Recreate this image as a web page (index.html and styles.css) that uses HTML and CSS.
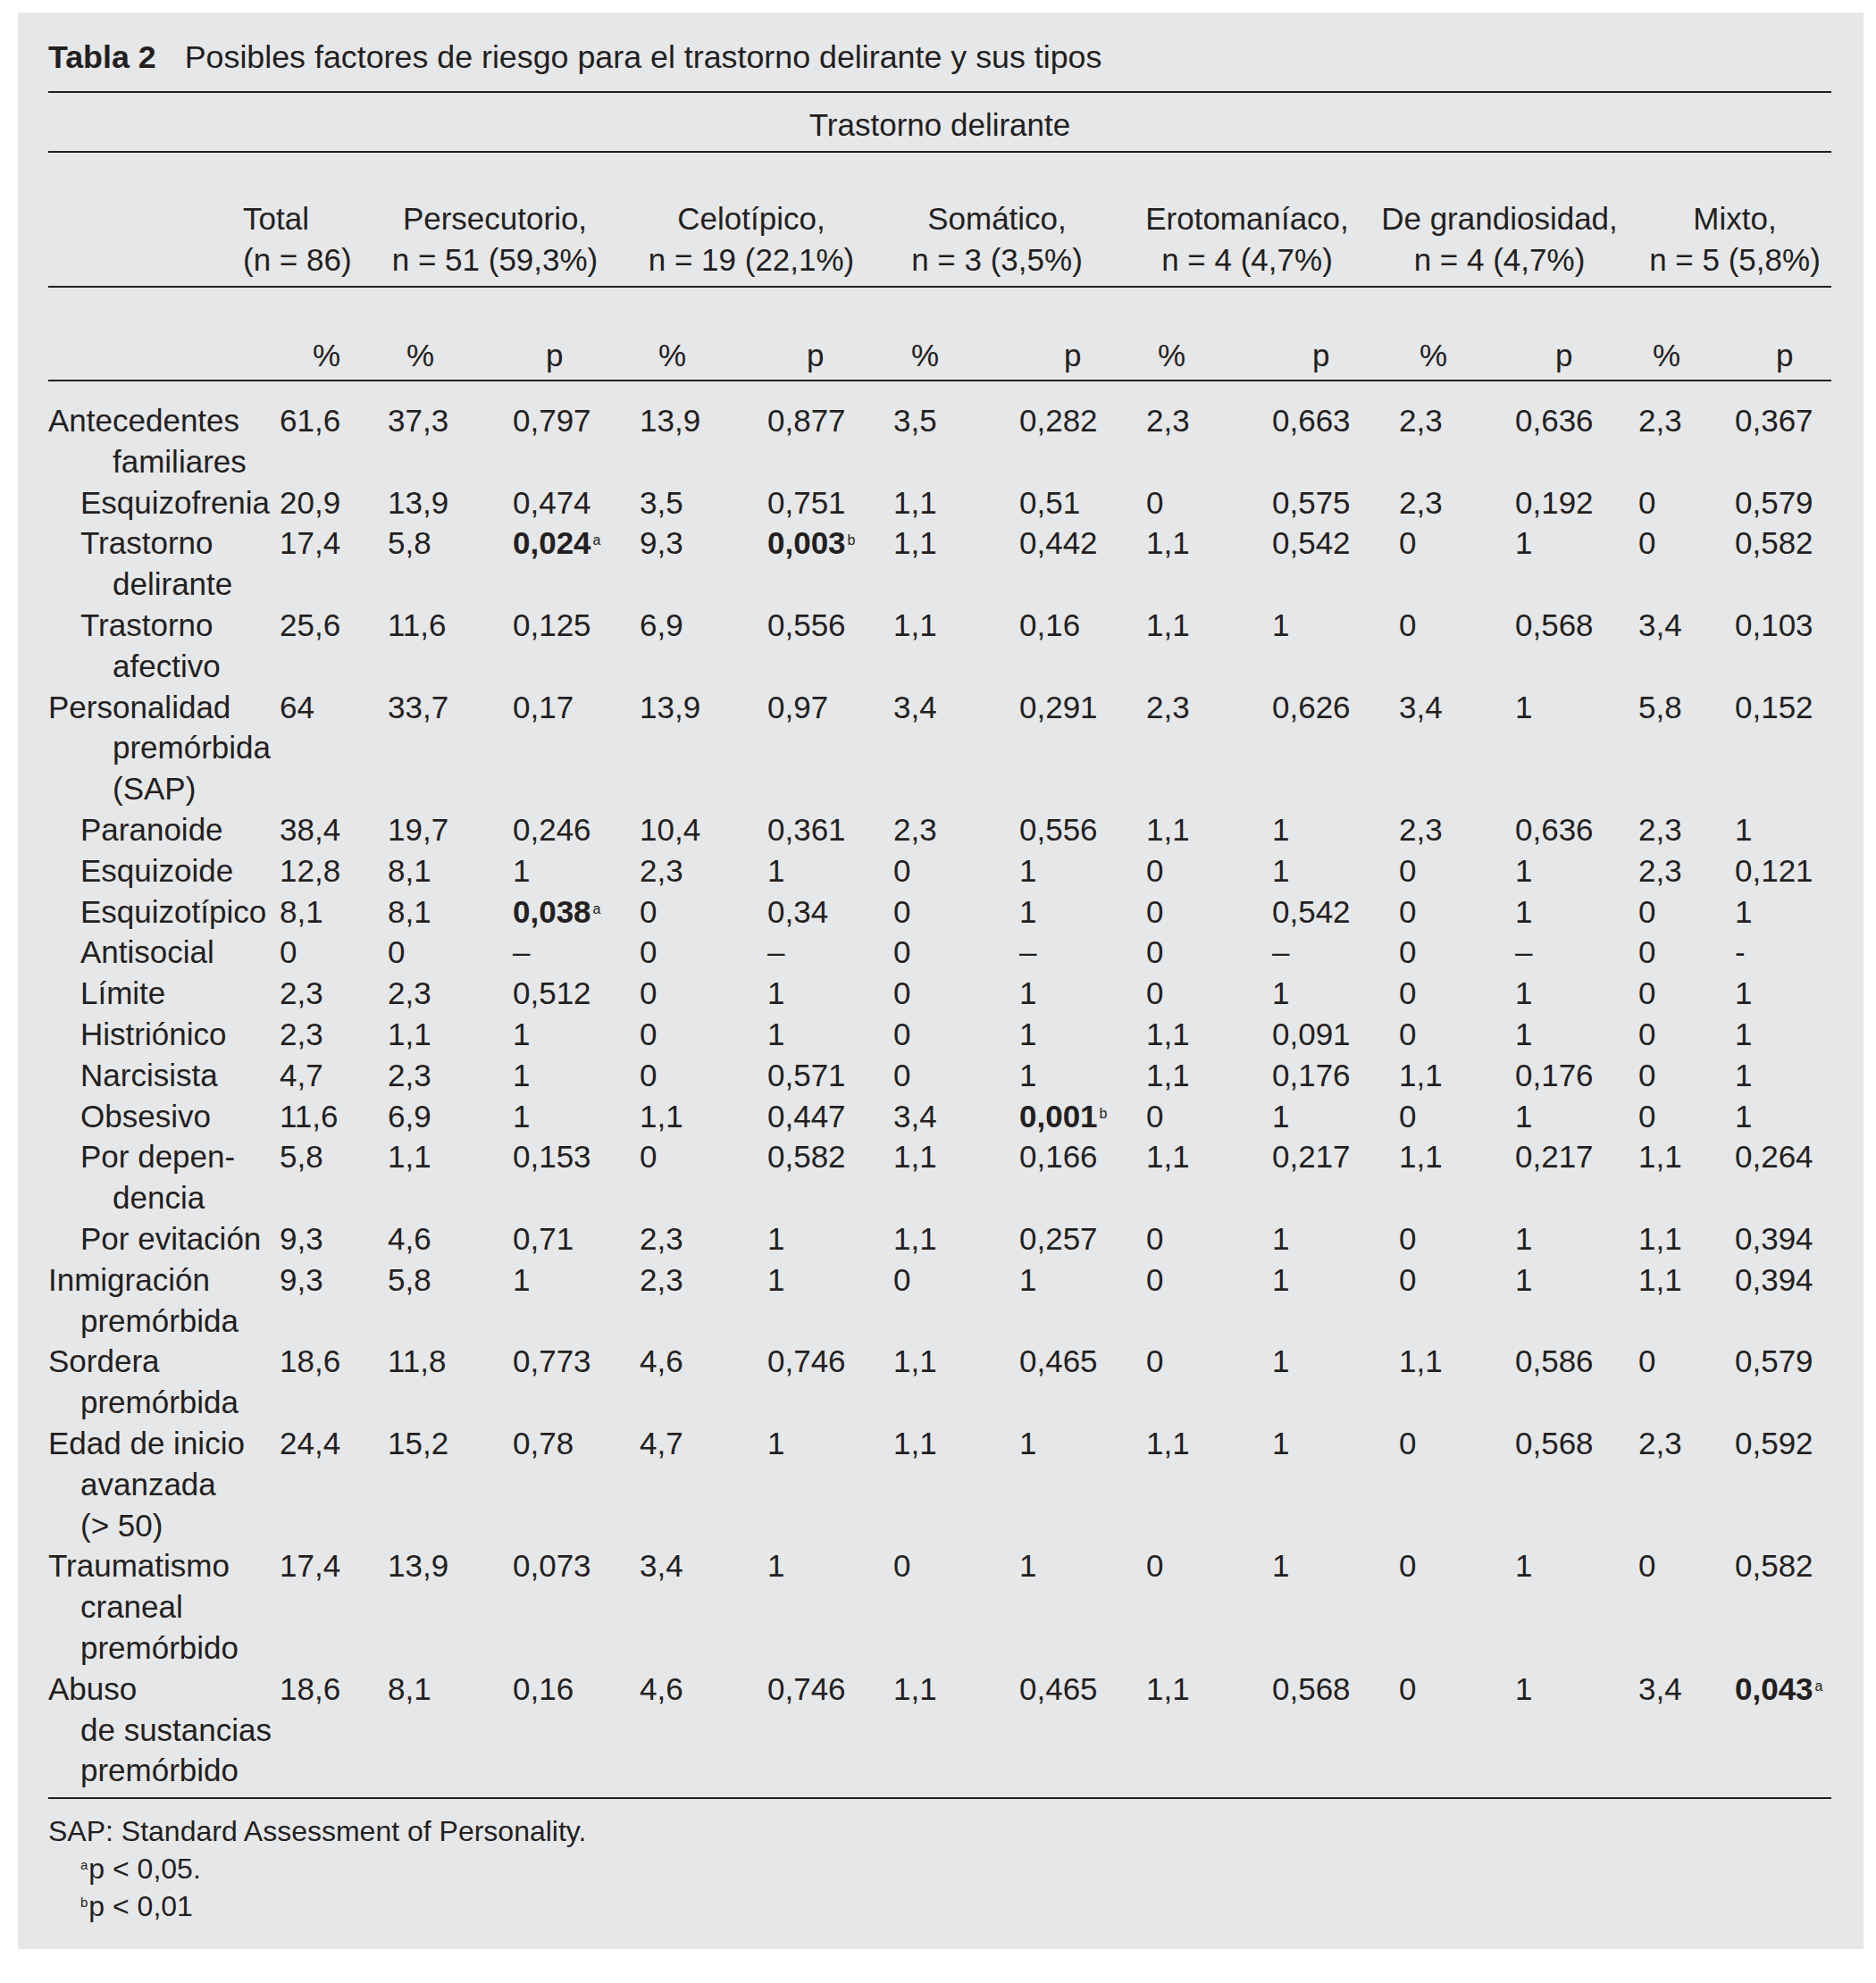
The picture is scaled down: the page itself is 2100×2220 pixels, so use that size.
FILE: index.html
```html
<!DOCTYPE html>
<html lang="es">
<head>
<meta charset="utf-8">
<title>Tabla 2</title>
<link rel="stylesheet" href="styles.css">
</head>
<body>
<div class="panel">
  <div class="title"><b class="title-num">Tabla 2</b><span>Posibles factores de riesgo para el trastorno delirante y sus tipos</span></div>
  <div class="rule"></div>
  <div class="super">Trastorno delirante</div>
  <div class="rule"></div>

  <div class="grid head">
    <div></div>
    <div class="h-total"><span>Total</span><span>(n = 86)</span></div>
    <div class="grp g-per"><span>Persecutorio,</span><span>n = 51 (59,3%)</span></div>
    <div class="grp g-cel"><span>Celotípico,</span><span>n = 19 (22,1%)</span></div>
    <div class="grp g-som"><span>Somático,</span><span>n = 3 (3,5%)</span></div>
    <div class="grp g-ero"><span>Erotomaníaco,</span><span>n = 4 (4,7%)</span></div>
    <div class="grp g-gra"><span>De grandiosidad,</span><span>n = 4 (4,7%)</span></div>
    <div class="grp g-mix"><span>Mixto,</span><span>n = 5 (5,8%)</span></div>
  </div>
  <div class="rule"></div>

  <div class="grid sub">
    <div></div>
    <div class="s1">%</div>
    <div class="s2">%</div><div class="s3">p</div>
    <div class="s4">%</div><div class="s5">p</div>
    <div class="s6">%</div><div class="s7">p</div>
    <div class="s8">%</div><div class="s9">p</div>
    <div class="s10">%</div><div class="s11">p</div>
    <div class="s12">%</div><div class="s13">p</div>
  </div>
  <div class="rule"></div>

  <div class="body">
    <div class="grid row"><div class="lbl">Antecedentes<span class="cont deep">familiares</span></div><div>61,6</div><div>37,3</div><div>0,797</div><div>13,9</div><div>0,877</div><div>3,5</div><div>0,282</div><div>2,3</div><div>0,663</div><div>2,3</div><div>0,636</div><div>2,3</div><div>0,367</div></div>
    <div class="grid row"><div class="lbl sub-item">Esquizofrenia</div><div>20,9</div><div>13,9</div><div>0,474</div><div>3,5</div><div>0,751</div><div>1,1</div><div>0,51</div><div>0</div><div>0,575</div><div>2,3</div><div>0,192</div><div>0</div><div>0,579</div></div>
    <div class="grid row"><div class="lbl sub-item">Trastorno<span class="cont">delirante</span></div><div>17,4</div><div>5,8</div><div><b class="sig">0,024<sup>a</sup></b></div><div>9,3</div><div><b class="sig">0,003<sup>b</sup></b></div><div>1,1</div><div>0,442</div><div>1,1</div><div>0,542</div><div>0</div><div>1</div><div>0</div><div>0,582</div></div>
    <div class="grid row"><div class="lbl sub-item">Trastorno<span class="cont">afectivo</span></div><div>25,6</div><div>11,6</div><div>0,125</div><div>6,9</div><div>0,556</div><div>1,1</div><div>0,16</div><div>1,1</div><div>1</div><div>0</div><div>0,568</div><div>3,4</div><div>0,103</div></div>
    <div class="grid row"><div class="lbl">Personalidad<span class="cont deep">premórbida</span><span class="cont deep">(SAP)</span></div><div>64</div><div>33,7</div><div>0,17</div><div>13,9</div><div>0,97</div><div>3,4</div><div>0,291</div><div>2,3</div><div>0,626</div><div>3,4</div><div>1</div><div>5,8</div><div>0,152</div></div>
    <div class="grid row"><div class="lbl sub-item">Paranoide</div><div>38,4</div><div>19,7</div><div>0,246</div><div>10,4</div><div>0,361</div><div>2,3</div><div>0,556</div><div>1,1</div><div>1</div><div>2,3</div><div>0,636</div><div>2,3</div><div>1</div></div>
    <div class="grid row"><div class="lbl sub-item">Esquizoide</div><div>12,8</div><div>8,1</div><div>1</div><div>2,3</div><div>1</div><div>0</div><div>1</div><div>0</div><div>1</div><div>0</div><div>1</div><div>2,3</div><div>0,121</div></div>
    <div class="grid row"><div class="lbl sub-item">Esquizotípico</div><div>8,1</div><div>8,1</div><div><b class="sig">0,038<sup>a</sup></b></div><div>0</div><div>0,34</div><div>0</div><div>1</div><div>0</div><div>0,542</div><div>0</div><div>1</div><div>0</div><div>1</div></div>
    <div class="grid row"><div class="lbl sub-item">Antisocial</div><div>0</div><div>0</div><div>–</div><div>0</div><div>–</div><div>0</div><div>–</div><div>0</div><div>–</div><div>0</div><div>–</div><div>0</div><div>-</div></div>
    <div class="grid row"><div class="lbl sub-item">Límite</div><div>2,3</div><div>2,3</div><div>0,512</div><div>0</div><div>1</div><div>0</div><div>1</div><div>0</div><div>1</div><div>0</div><div>1</div><div>0</div><div>1</div></div>
    <div class="grid row"><div class="lbl sub-item">Histriónico</div><div>2,3</div><div>1,1</div><div>1</div><div>0</div><div>1</div><div>0</div><div>1</div><div>1,1</div><div>0,091</div><div>0</div><div>1</div><div>0</div><div>1</div></div>
    <div class="grid row"><div class="lbl sub-item">Narcisista</div><div>4,7</div><div>2,3</div><div>1</div><div>0</div><div>0,571</div><div>0</div><div>1</div><div>1,1</div><div>0,176</div><div>1,1</div><div>0,176</div><div>0</div><div>1</div></div>
    <div class="grid row"><div class="lbl sub-item">Obsesivo</div><div>11,6</div><div>6,9</div><div>1</div><div>1,1</div><div>0,447</div><div>3,4</div><div><b class="sig">0,001<sup>b</sup></b></div><div>0</div><div>1</div><div>0</div><div>1</div><div>0</div><div>1</div></div>
    <div class="grid row"><div class="lbl sub-item">Por depen-<span class="cont">dencia</span></div><div>5,8</div><div>1,1</div><div>0,153</div><div>0</div><div>0,582</div><div>1,1</div><div>0,166</div><div>1,1</div><div>0,217</div><div>1,1</div><div>0,217</div><div>1,1</div><div>0,264</div></div>
    <div class="grid row"><div class="lbl sub-item">Por evitación</div><div>9,3</div><div>4,6</div><div>0,71</div><div>2,3</div><div>1</div><div>1,1</div><div>0,257</div><div>0</div><div>1</div><div>0</div><div>1</div><div>1,1</div><div>0,394</div></div>
    <div class="grid row"><div class="lbl">Inmigración<span class="cont">premórbida</span></div><div>9,3</div><div>5,8</div><div>1</div><div>2,3</div><div>1</div><div>0</div><div>1</div><div>0</div><div>1</div><div>0</div><div>1</div><div>1,1</div><div>0,394</div></div>
    <div class="grid row"><div class="lbl">Sordera<span class="cont">premórbida</span></div><div>18,6</div><div>11,8</div><div>0,773</div><div>4,6</div><div>0,746</div><div>1,1</div><div>0,465</div><div>0</div><div>1</div><div>1,1</div><div>0,586</div><div>0</div><div>0,579</div></div>
    <div class="grid row"><div class="lbl">Edad de inicio<span class="cont">avanzada</span><span class="cont">(&gt; 50)</span></div><div>24,4</div><div>15,2</div><div>0,78</div><div>4,7</div><div>1</div><div>1,1</div><div>1</div><div>1,1</div><div>1</div><div>0</div><div>0,568</div><div>2,3</div><div>0,592</div></div>
    <div class="grid row"><div class="lbl">Traumatismo<span class="cont">craneal</span><span class="cont">premórbido</span></div><div>17,4</div><div>13,9</div><div>0,073</div><div>3,4</div><div>1</div><div>0</div><div>1</div><div>0</div><div>1</div><div>0</div><div>1</div><div>0</div><div>0,582</div></div>
    <div class="grid row"><div class="lbl">Abuso<span class="cont">de sustancias</span><span class="cont">premórbido</span></div><div>18,6</div><div>8,1</div><div>0,16</div><div>4,6</div><div>0,746</div><div>1,1</div><div>0,465</div><div>1,1</div><div>0,568</div><div>0</div><div>1</div><div>3,4</div><div><b class="sig">0,043<sup>a</sup></b></div></div>
  </div>
  <div class="rule"></div>

  <div class="notes">
    <div>SAP: Standard Assessment of Personality.</div>
    <div class="note-ind"><sup>a</sup>p &lt; 0,05.</div>
    <div class="note-ind"><sup>b</sup>p &lt; 0,01</div>
  </div>
</div>
</body>
</html>
```

FILE: styles.css
```css
html, body {
  margin: 0;
  padding: 0;
  background: #ffffff;
}

body {
  font-family: "Liberation Sans", Arial, sans-serif;
  font-size: 35px;
  color: #231f20;
}

.panel {
  box-sizing: border-box;
  width: 2066px;
  margin: 14px 0 0 20px;
  padding: 27px 36px 27px 34px;
  background: #e6e7e9;
}

.title {
  font-size: 35.8px;
  line-height: 46px;
  white-space: nowrap;
  margin-bottom: 15px;
}

.title-num {
  font-weight: bold;
  margin-right: 32px;
}

.rule {
  height: 0;
  border-top: 2px solid #231f20;
}

.super {
  text-align: center;
  line-height: 46px;
  margin: 13px 0 6px;
}

.grid {
  display: grid;
  grid-template-columns: 259px 121px 140px 142px 143px 141px 141px 142px 141px 142px 130px 138px 108px 108px;
}

/* column header rows */
.head {
  line-height: 46px;
  margin: 51px 0 6px;
  white-space: nowrap;
}

.head span {
  display: block;
}

.h-total {
  margin-left: -41px;
}

.grp {
  grid-column: span 2;
  display: flex;
  flex-direction: column;
  align-items: center;
}

.g-per { padding-right: 42px; }
.g-cel { padding-right: 34px; }
.g-som { padding-right: 51px; }
.g-ero { padding-right: 57px; }
.g-gra { padding-right: 43px; }
.g-mix { padding-right: 0; }

/* % / p sub header */
.sub {
  line-height: 46px;
  margin: 53px 0 4px;
}

.s1 { padding-left: 37px; }
.s2 { padding-left: 21px; }
.s3 { padding-left: 37px; }
.s4 { padding-left: 21px; }
.s5 { padding-left: 44px; }
.s6 { padding-left: 20px; }
.s7 { padding-left: 50px; }
.s8 { padding-left: 13px; }
.s9 { padding-left: 45px; }
.s10 { padding-left: 23px; }
.s11 { padding-left: 45px; }
.s12 { padding-left: 16px; }
.s13 { padding-left: 46px; }

/* body rows */
.body {
  margin: 21px 0 7px;
}

.row {
  line-height: 45.8px;
  white-space: nowrap;
}

.lbl.sub-item {
  padding-left: 36px;
}

.cont {
  display: block;
  padding-left: 36px;
}

.cont.deep {
  padding-left: 72px;
}

.sig {
  font-weight: bold;
}

sup {
  font-size: 16px;
  font-weight: normal;
  line-height: 0;
  vertical-align: 10px;
  margin-left: 2px;
}

/* footnotes */
.notes {
  font-size: 32px;
  line-height: 42px;
  margin-top: 15px;
}

.note-ind {
  padding-left: 36px;
}

.note-ind sup {
  font-size: 15px;
  vertical-align: 10px;
  margin-left: 0;
  margin-right: 1px;
}
```
